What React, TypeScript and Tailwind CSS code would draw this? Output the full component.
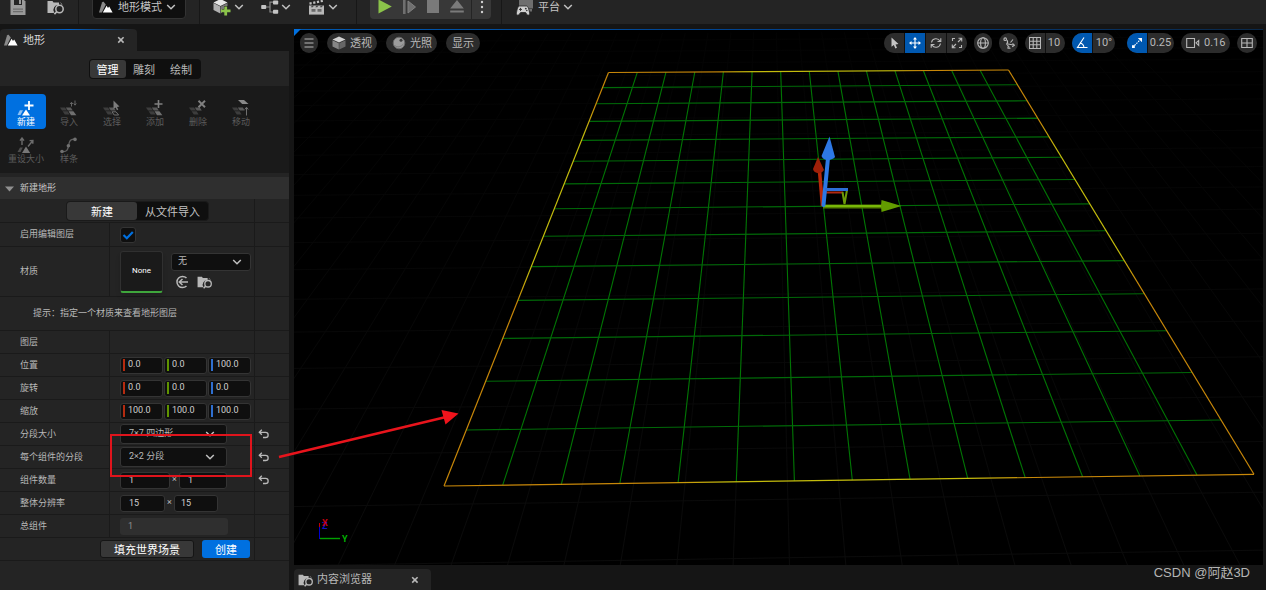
import React from "react";

type Pt = [number, number];

/* ---------- icons ---------- */

const Chevron = ({ className = "" }: { className?: string }) => (
  <svg viewBox="0 0 10 8" className={`h-2 w-[10px] shrink-0 ${className}`} fill="none" stroke="#c0c0c0" strokeWidth="1.5">
    <path d="M1.2 2 L5 5.8 L8.8 2" />
  </svg>
);

const Mountain = () => (
  <svg viewBox="0 0 14 12" className="h-3 w-[14px] shrink-0">
    <path d="M0 11.5 L3 1.5 Q3.6 0.4 4.6 0.8 L6.8 3.6 L3.6 10 L2.8 11.5 Z" fill="#8a8a8a" />
    <path d="M3.8 11.6 L7.6 4.8 L9 7 L10.2 5.4 L13.6 11.6 Z" fill="#fff" />
  </svg>
);

const SaveIcon = () => (
  <svg viewBox="0 0 16 16" className="h-4 w-4 shrink-0">
    <path d="M0.5 0 H13 L15.5 2.5 V16 H0.5 Z" fill="#9a9a9a" />
    <path d="M4 0 H12 V6 H4 Z" fill="#242424" />
    <path d="M9 0.5 H11 V5 H9 Z" fill="#9a9a9a" />
    <path d="M3 9.5 H13 V10.7 H3 Z M3 12 H13 V13.2 H3 Z" fill="#6d6d6d" />
  </svg>
);

const FolderSearch = ({ className = "h-4 w-[18px]" }: { className?: string }) => (
  <svg viewBox="0 0 18 16" className={`shrink-0 ${className}`}>
    <path d="M0.5 2 H5.5 L6.5 3.5 H12 V6.2 A4.8 4.8 0 0 0 7.2 13.6 L6.5 14 H0.5 Z" fill="#b8b8b8" />
    <path d="M13.5 3.5 L14.8 5 V6" fill="none" stroke="#777" />
    <circle cx="12.5" cy="10" r="3.7" fill="none" stroke="#b8b8b8" strokeWidth="1.5" />
    <path d="M9.8 12.7 L7.4 15.2" stroke="#b8b8b8" strokeWidth="1.7" />
  </svg>
);

const CubePlus = () => (
  <svg viewBox="0 0 18 18" className="h-[18px] w-[18px] shrink-0">
    <path d="M0.5 4.5 L7.5 1 L14.5 4.5 L7.5 8 Z" fill="#e6e6e6" />
    <path d="M0.5 5 L7.3 8.4 V15.5 L0.5 12 Z" fill="#b0b0b0" />
    <path d="M14.5 5 L7.7 8.4 V15.5 L9 14.5 V11 H11 V8 H14.5 Z" fill="#777" />
    <path d="M11.3 8.5 H14.1 V11.5 H17.5 V14.2 H14.1 V17.5 H11.3 V14.2 H8 V11.5 H11.3 Z" fill="#8bc34a" />
  </svg>
);

const Nodes = () => (
  <svg viewBox="0 0 18 14" className="h-[14px] w-[18px] shrink-0">
    <path d="M5 7 H9 M12 2.2 H9 V12 H12" fill="none" stroke="#8a8a8a" strokeWidth="1.2" />
    <rect x="0.2" y="5" width="5" height="4" rx="0.8" fill="#c4c4c4" />
    <rect x="12" y="0.5" width="5.2" height="4" rx="0.8" fill="#c4c4c4" />
    <rect x="12" y="9.8" width="5.2" height="4" rx="0.8" fill="#c4c4c4" />
  </svg>
);

const Clapper = () => (
  <svg viewBox="0 0 17 16" className="h-4 w-[17px] shrink-0">
    <path d="M1.5 4.6 L16 1.6" stroke="#c0c0c0" strokeWidth="2.2" strokeDasharray="2.2 1.6" />
    <path d="M1 6.5 H16 V15.6 H1 Z" fill="#b8b8b8" />
    <path d="M3.500 10 H7.500 V12.800 H3.500 Z M9.500 10 H13.500 V12.800 H9.500 Z" fill="#6a6a6a" />
    <path d="M4 6.500 l2 0 l-1.2 1.800 h-2z M8.500 6.500 l2 0 l-1.2 1.800 h-2z M13 6.500 l2 0 l-1.2 1.800 h-2z" fill="#4a4a4a" />
  </svg>
);

const Platform = () => (
  <svg viewBox="0 0 18 18" className="h-[18px] w-[18px] shrink-0">
    <rect x="3" y="0" width="14" height="10.5" fill="#6e6e6e" />
    <path d="M12 11 H16 V13.5 H14 Z" fill="#6e6e6e" />
    <path d="M3.4 8 H10.6 C12 8 13.4 12.5 13.6 15.6 C13.6 17.6 11.5 17.6 10.5 16 L9.6 14.5 H4.6 L3.6 16 C2.4 17.6 0.5 17.6 0.4 15.6 C0.6 12.5 2 8 3.4 8 Z" fill="#d0d0d0" stroke="#242424" strokeWidth="0.8" />
    <path d="M3 11.4 H6 M4.5 9.9 V12.9" stroke="#333" />
    <circle cx="9.8" cy="10.6" r="0.9" fill="#333" />
    <circle cx="10.8" cy="12.5" r="0.8" fill="#333" />
  </svg>
);

const Close = () => (
  <svg viewBox="0 0 8 8" className="h-2 w-2" stroke="#b8b8b8" strokeWidth="1.6">
    <path d="M1.2 1.2 L6.6 6.6 M6.6 1.2 L1.2 6.6" />
  </svg>
);

const Reset = () => (
  <svg viewBox="0 0 12 10" className="h-[10px] w-3" fill="none" stroke="#b8b8b8" strokeWidth="1.3">
    <path d="M3.8 0.8 L1.300 3.3 L3.8 5.8 M1.500 3.3 H7.6 C11 3.3 11 8.5 7.6 8.5 H5" />
  </svg>
);

/* Palette drawings share an 18x17 box */
const Tiles = () => (
  <>
    <path d="M0 7.5 H5 L7 10.5 H2 Z" fill="#3d3d3d" />
    <path d="M5.8 7.5 H10.8 L12.8 10.5 H7.8 Z" fill="#5a5a5a" />
    <path d="M2.6 11.3 H7.6 L9.6 14.5 H4.8 Z" fill="#3d3d3d" />
  </>
);
const Tile = () => <path d="M8.5 11.3 H13.4 L16.4 15.2 H11 Z" fill="#707070" />;

const paletteArt: Record<string, React.ReactNode> = {
  新建: (
    <>
      <path d="M0.5 15 L2.8 10.2 H6 L3.5 15 Z" fill="#8cc0f4" />
      <path d="M5 15.4 L9 9.4 L13 15.4 Z" fill="#fff" />
      <path d="M12 1 V10 M7.5 5.5 H16.5" stroke="#fff" strokeWidth="1.8" />
    </>
  ),
  导入: (
    <>
      <Tiles />
      <Tile />
      <path d="M11.5 6.5 V2.5 M10.2 4 L11.5 2.3 L12.8 4 M15 0.5 V5 M13.7 3.5 L15 5.2 L16.3 3.5" fill="none" stroke="#666" />
    </>
  ),
  选择: (
    <>
      <Tiles />
      <path d="M9 11.8 H13 L15.6 15 H11.2 Z" fill="none" stroke="#707070" />
      <path d="M10.5 0.5 V9 L12.6 7.4 L14 10.2 L15.3 9.5 L14 7 L16.5 6.4 Z" fill="#7d7d7d" />
    </>
  ),
  添加: (
    <>
      <Tiles />
      <Tile />
      <path d="M12.5 0 V8 M8.5 4 H16.5" stroke="#808080" strokeWidth="1.6" />
    </>
  ),
  删除: (
    <>
      <Tiles />
      <path d="M9.5 0.8 L16 7.2 M16 0.8 L9.5 7.2" stroke="#808080" strokeWidth="1.9" />
    </>
  ),
  移动: (
    <>
      <Tiles />
      <path d="M6 0 H12 L16.5 4 H10.2 Z" fill="#8a8a8a" />
      <path d="M14.5 15.5 V7.5 M12.8 9.5 L14.5 7.2 L16.2 9.5" fill="none" stroke="#707070" />
    </>
  ),
  重设大小: (
    <>
      <path d="M0.5 15 L3 10.5 H5.8 L3.5 15 Z" fill="#4d4d4d" />
      <path d="M5 16 L9 9.6 L13.2 16 Z" fill="#777" />
      <path d="M5 8 V1.5 M3 3.6 L5 1 L7 3.6 M11 9.5 L15.5 4 M12.6 3.6 L15.9 3.4 L15.8 6.8" fill="none" stroke="#6c6c6c" strokeWidth="1.4" />
    </>
  ),
  样条: (
    <>
      <path d="M2 14.5 C7 15.5 7.8 12.5 8.5 9 C9.2 4 10.5 1.6 14.8 2.4" fill="none" stroke="#5f5f5f" strokeWidth="1.3" />
      <circle cx="2" cy="14.5" r="1.8" fill="#707070" />
      <circle cx="8.4" cy="8.8" r="1.8" fill="#707070" />
      <circle cx="15" cy="2.4" r="1.8" fill="#707070" />
    </>
  ),
};

/* ---------- top bar ---------- */

const Divider = ({ className = "" }: { className?: string }) => (
  <span className={`h-full w-px shrink-0 bg-[#171717] ${className}`} />
);

const iconBtn = "flex h-full shrink-0 items-center";

function TopBar() {
  return (
    <header className="flex h-6 shrink-0 items-end overflow-hidden bg-[#242424]">
      <div className="flex h-[34px] items-center">
        <button aria-label="保存" className={`${iconBtn} ml-[10px]`}><SaveIcon /></button>
        <button aria-label="浏览" className={`${iconBtn} ml-5`}><FolderSearch className="h-4 w-5" /></button>
        <Divider className="ml-3" />
        <button className="ml-[13px] flex h-6 w-[94px] items-center rounded border border-[#333] bg-[#0f0f0f] pl-[6px] text-[11px] text-[#c4c4c4]">
          <Mountain />
          <span className="mr-1 ml-[5px] pt-[2px]">地形模式</span>
          <Chevron />
        </button>
        <Divider className="ml-[13px]" />
        <button aria-label="添加内容" className={`${iconBtn} ml-[13px] gap-[3px]`}><CubePlus /><Chevron /></button>
        <button aria-label="蓝图" className={`${iconBtn} ml-[17px] gap-[2px]`}><Nodes /><Chevron /></button>
        <button aria-label="过场动画" className={`${iconBtn} ml-[17px] gap-[3px]`}><Clapper /><Chevron /></button>
        <Divider className="ml-[18px]" />
        <div className="ml-[13px] flex h-6 items-center rounded bg-[#383838]">
          <button aria-label="播放" className="pl-2">
            <svg viewBox="0 0 14 16" className="h-4 w-[14px]"><path d="M0.5 0.5 L13.8 7.5 L0.5 14.5 Z" fill="#8bc34a" /></svg>
          </button>
          <button aria-label="步进" className="pl-[11px]">
            <svg viewBox="0 0 14 16" className="h-4 w-[14px]"><path d="M0 1 H2.6 V15 H0 Z" fill="#6f6f6f" /><path d="M5 2 L12.5 8 L5 14 Z" fill="#6f6f6f" stroke="#808080" /></svg>
          </button>
          <button aria-label="停止" className="pl-[10px]">
            <svg viewBox="0 0 12 16" className="h-4 w-3"><path d="M0 1 H12 V14 H0 Z" fill="#7a7a7a" /></svg>
          </button>
          <button aria-label="弹出" className="pr-[7px] pl-[11px]">
            <svg viewBox="0 0 14 16" className="h-4 w-[14px]"><path d="M7 1 L13.8 9.5 H0.2 Z M0.2 11.5 H13.8 V13.6 H0.2 Z" fill="#7a7a7a" /></svg>
          </button>
          <button aria-label="更多" className="flex h-6 w-5 items-center justify-center border-l border-[#242424]">
            <svg viewBox="0 0 4 18" className="h-[18px] w-1" fill="#d0d0d0"><circle cx="2" cy="4" r="1.2" /><circle cx="2" cy="9" r="1.2" /><circle cx="2" cy="14" r="1.2" /></svg>
          </button>
        </div>
        <Divider className="ml-[10px]" />
        <button className={`${iconBtn} ml-[14px] text-[11px] text-[#c4c4c4]`}>
          <Platform />
          <span className="mr-[3px] ml-1 pt-[2px]">平台</span>
          <Chevron />
        </button>
      </div>
    </header>
  );
}

/* ---------- landscape panel ---------- */

function Row({ label, id, wide = false, reset = false, height = "h-[23px]", children }: {
  label?: string; id?: string; wide?: boolean; reset?: boolean; height?: string; children?: React.ReactNode;
}) {
  return (
    <div className={`flex ${height} border-b border-[#1a1a1a]`}>
      {!wide && (
        <label htmlFor={id} className="flex w-[110px] shrink-0 items-center border-r border-[#1a1a1a] pt-px pl-5 text-[9px] text-[#b8b8b8]">
          {label}
        </label>
      )}
      <div className={`flex shrink-0 items-center border-r border-[#1a1a1a] ${wide ? "w-[255px]" : "w-[145px] pl-[10px]"}`}>{children}</div>
      {reset && (
        <button aria-label={`重置${label}`} className="ml-[3px]"><Reset /></button>
      )}
    </div>
  );
}

const field = "h-[17px] rounded-[3px] border border-[#343434] bg-[#0f0f0f] text-[9px] text-[#d0d0d0] outline-none";

function Vector({ id, label, values }: { id: string; label: string; values: string[] }) {
  const bars = ["bg-[#b52b10]", "bg-[#5f9300]", "bg-[#2f6fd0]"];
  return (
    <Row label={label} id={`${id}-0`}>
      <div className="flex gap-px">
        {values.map((v, i) => (
          <div key={i} className={`flex w-[43px] items-center pl-[2px] ${field}`}>
            <span className={`h-3 w-[2px] shrink-0 ${bars[i]}`} />
            <input id={`${id}-${i}`} aria-label={`${label} ${"XYZ"[i]}`} defaultValue={v} className="w-full min-w-0 bg-transparent pl-[3px] outline-none" />
          </div>
        ))}
      </div>
    </Row>
  );
}

function Pick({ id, value, compact = false }: { id: string; value: string; compact?: boolean }) {
  return (
    <div className={`relative flex items-center ${compact ? "h-[18px] w-20" : "h-5 w-[107px]"}`}>
      <select id={id} aria-label={value} className={`size-full appearance-none rounded-[3px] border border-[#343434] bg-[#0f0f0f] text-[9px] text-[#b8b8b8] outline-none ${compact ? "pl-[6px]" : "pl-2"}`}>
        <option>{value}</option>
      </select>
      <Chevron className={`pointer-events-none absolute ${compact ? "right-[9px]" : "right-3"}`} />
    </div>
  );
}

const textBtn = "h-[18px] rounded-[3px] pt-[3px] leading-none";

function LandscapePanel() {
  const tools = ["新建", "导入", "选择", "添加", "删除", "移动", "重设大小", "样条"];
  return (
    <aside className="relative z-10 flex w-[289px] shrink-0 flex-col">
      <div className="relative flex h-[22px] w-[137px] items-center rounded-t bg-[#242424] pr-3 pl-1 text-[11px] text-[#d8d8d8]">
        <span className="absolute top-0 right-1 left-1 h-px bg-linear-to-r from-transparent via-[#0060c8] to-transparent" />
        <Mountain />
        <span className="ml-[5px] flex-1 pt-[2px]">地形</span>
        <button aria-label="关闭"><Close /></button>
      </div>
      <div className="flex flex-1 flex-col bg-[#242424]">
        <div className="flex h-[35px] items-center justify-center">
          <div className="flex h-5 items-center rounded bg-[#0f0f0f] p-px text-[11px] text-[#b8b8b8]">
            <button className={`${textBtn} w-9 bg-[#383838] text-white`}>管理</button>
            <button className={`${textBtn} w-[37px]`}>雕刻</button>
            <button className={`${textBtn} w-[37px]`}>绘制</button>
          </div>
        </div>
        <div className="flex h-[87px] flex-wrap content-start gap-x-[3px] gap-y-[2px] bg-[#1a1a1a] pt-2 pr-3 pl-[6px]">
          {tools.map((t, i) => (
            <button key={t} className={`flex h-[35px] w-10 flex-col items-center rounded pt-[6px] text-[9px] leading-[11px] whitespace-nowrap ${i === 0 ? "bg-[#0070e0] text-white" : "text-[#5c5c5c]"}`}>
              <svg viewBox="0 0 18 17" className="h-[17px] w-[18px] shrink-0">{paletteArt[t]}</svg>
              {t}
            </button>
          ))}
        </div>
        <button className="mt-1 flex h-[22px] items-center gap-[6px] bg-[#2f2f2f] pt-px pl-[5px] text-[9px] text-[#c8c8c8]">
          <svg viewBox="0 0 9 6" className="h-[6px] w-[9px]"><path d="M0 0.5 H9 L4.5 5.5 Z" fill="#909090" /></svg>
          新建地形
        </button>
        <Row wide height="h-6">
          <div className="ml-[66px] flex h-5 items-center rounded border border-[#1a1a1a] bg-[#0f0f0f] text-[11px] text-[#c4c4c4]">
            <button className={`${textBtn} w-[70px] bg-[#383838] text-white`}>新建</button>
            <button className={`${textBtn} w-[71px]`}>从文件导入</button>
          </div>
        </Row>
        <Row label="启用编辑图层" id="layers" height="h-6">
          <span className="relative flex size-4">
            <input id="layers" type="checkbox" defaultChecked className="peer size-4 appearance-none rounded-[3px] border border-[#343434] bg-[#0f0f0f]" />
            <svg viewBox="0 0 16 16" className="pointer-events-none absolute size-4 opacity-0 peer-checked:opacity-100" fill="none" stroke="#0070e0" strokeWidth="2.2"><path d="M3.5 8 L6.8 11.2 L12.8 5" /></svg>
          </span>
        </Row>
        <Row label="材质" id="material" height="h-[50px]">
          <button className="flex h-[42px] w-[43px] items-center justify-center rounded-[3px] border border-b-2 border-[#303030] border-b-[#3fa63c] bg-[#1a1a1a] text-[8px] text-white shadow-md">None</button>
          <div className="ml-2 flex flex-col gap-1 pb-[2px]">
            <Pick id="material" value="无" compact />
            <div className="flex gap-2 pl-1">
              <button aria-label="使用所选资产">
                <svg viewBox="0 0 14 14" className="size-[14px]" fill="none" stroke="#b8b8b8" strokeWidth="1.5"><path d="M11.5 3 A5.6 5.6 0 1 0 11.5 11 M13 7 H4.5 M7.5 4 L4.3 7 L7.5 10" /></svg>
              </button>
              <button aria-label="浏览到资产"><FolderSearch className="h-[14px] w-4" /></button>
            </div>
          </div>
        </Row>
        <Row wide height="h-[34px]">
          <p className="pl-[33px] text-[9px] text-[#b8b8b8]">提示：指定一个材质来查看地形图层</p>
        </Row>
        <Row label="图层" />
        <Vector id="pos" label="位置" values={["0.0", "0.0", "100.0"]} />
        <Vector id="rot" label="旋转" values={["0.0", "0.0", "0.0"]} />
        <Vector id="scale" label="缩放" values={["100.0", "100.0", "100.0"]} />
        <Row label="分段大小" id="section" reset><Pick id="section" value="7×7 四边形" /></Row>
        <Row label="每个组件的分段" id="per" reset><Pick id="per" value="2×2 分段" /></Row>
        <Row label="组件数量" id="cx" reset>
          <input id="cx" defaultValue="1" className={`w-[50px] pl-2 ${field}`} />
          <span className="w-[9px] text-center text-[9px] text-[#b8b8b8]">×</span>
          <input aria-label="组件数量 Y" defaultValue="1" className={`w-12 pl-2 ${field}`} />
        </Row>
        <Row label="整体分辨率" id="rx">
          <input id="rx" defaultValue="15" className={`w-[45px] pl-2 ${field}`} />
          <span className="w-[9px] text-center text-[9px] text-[#b8b8b8]">×</span>
          <input aria-label="整体分辨率 Y" defaultValue="15" className={`w-11 pl-[6px] ${field}`} />
        </Row>
        <Row label="总组件" id="total">
          <input id="total" readOnly value="1" className="h-[17px] w-[108px] rounded-[3px] bg-[#2f2f2f] pl-2 text-[9px] text-[#909090] outline-none" />
        </Row>
        <Row wide>
          <div className="ml-auto flex gap-2 pr-1 text-[11px] text-white">
            <button className={`${textBtn} w-[94px] bg-[#383838] ring-1 ring-[#151515] ring-inset`}>填充世界场景</button>
            <button className={`${textBtn} w-12 bg-[#0070e0]`}>创建</button>
          </div>
        </Row>
      </div>
      {/* Callout from the section dropdown to the terrain edge */}
      <svg viewBox="0 0 480 561" className="pointer-events-none absolute top-0 left-0 h-[561px] w-[480px] max-w-none">
        <rect x="111" y="406" width="140" height="41" fill="none" stroke="#e0141c" strokeWidth="2" />
        <path d="M279 428 L446 388" stroke="#e8141c" strokeWidth="2.4" />
        <path d="M441.5 381 L458.5 384.5 L445.5 395.5 Z" fill="#f0141c" />
      </svg>
    </aside>
  );
}

/* ---------- viewport ---------- */

const CELLS = 14;
const corners: Pt[] = [[314.5, 43.5], [714.5, 41], [960, 445.3], [150, 457]];

// Projective map from the unit square to the terrain corners
function project(u: number, v: number): Pt {
  const [[x0, y0], [x1, y1], [x2, y2], [x3, y3]] = corners;
  const dx1 = x1 - x2, dx2 = x3 - x2, sx = x0 - x1 + x2 - x3;
  const dy1 = y1 - y2, dy2 = y3 - y2, sy = y0 - y1 + y2 - y3;
  const det = dx1 * dy2 - dx2 * dy1;
  const g = (sx * dy2 - dx2 * sy) / det;
  const h = (dx1 * sy - sx * dy1) / det;
  const w = g * u + h * v + 1;
  return [
    ((x1 - x0 + g * x1) * u + (x3 - x0 + h * x3) * v + x0) / w,
    ((y1 - y0 + g * y1) * u + (y3 - y0 + h * y3) * v + y0) / w,
  ];
}

function segment(u0: number, v0: number, u1: number, v1: number) {
  const a = project(u0 / CELLS, v0 / CELLS);
  const b = project(u1 / CELLS, v1 / CELLS);
  return `M${a[0].toFixed(1)} ${a[1].toFixed(1)} L${b[0].toFixed(1)} ${b[1].toFixed(1)}`;
}

function Scene() {
  const inner = Array.from({ length: CELLS - 1 }, (_, i) => i + 1);
  const ground = Array.from({ length: 44 }, (_, i) => i - 22);
  const [a, b, c, d] = corners;
  const edges: [Pt, Pt, number, number][] = [[a, b, 0.35, 0.7], [b, c, 0.2, 0.45], [c, d, 0.35, 0.65], [d, a, 0.52, 0.85]];
  return (
    <svg viewBox="0 0 969 536" preserveAspectRatio="xMidYMin slice" className="absolute inset-0 size-full" fill="none">
      <linearGradient id="ground" gradientUnits="userSpaceOnUse" x1="0" y1="0" x2="0" y2="536">
        <stop offset="0" stopColor="#030303" />
        <stop offset="1" stopColor="#0b0b0b" />
      </linearGradient>
      <g stroke="url(#ground)">
        {ground.map((k) => (
          <path key={`u${k}`} d={segment(0.6 + 0.88 * k, -3, 0.6 + 0.88 * k, 16.5)} />
        ))}
        {ground.filter((k) => k > -20 && k < 3).map((k) => (
          <path key={`v${k}`} d={segment(-16, 14.3 + 0.88 * k, 28, 14.3 + 0.88 * k)} />
        ))}
      </g>
      <g stroke="#007604" strokeWidth="1.1">
        {inner.map((k) => <path key={`c${k}`} d={segment(k, 0, k, CELLS)} />)}
        {inner.map((k) => <path key={`r${k}`} d={segment(0, k, CELLS, k)} stroke="#006a08" />)}
      </g>
      {edges.map(([p, q, s, e], i) => (
        <g key={i}>
          <linearGradient id={`edge${i}`} gradientUnits="userSpaceOnUse" x1={p[0]} y1={p[1]} x2={q[0]} y2={q[1]}>
            <stop offset={s - 0.08} stopColor="#c88708" />
            <stop offset={s} stopColor="#c4bc0c" />
            <stop offset={e} stopColor="#c4bc0c" />
            <stop offset={e + 0.08} stopColor="#c88708" />
          </linearGradient>
          <path d={`M${p[0]} ${p[1]} L${q[0]} ${q[1]}`} stroke={`url(#edge${i})`} strokeWidth="1.2" />
        </g>
      ))}
      {/* Move gizmo */}
      <path d="M528.5 177 L525.5 142" stroke="#b82808" strokeWidth="3.5" />
      <path d="M524 128 L519 140 Q519.500 143.500 525 144.500 Q529 143 530 141 Z" fill="#a02008" />
      <path d="M532 163.5 H549" stroke="#b02810" strokeWidth="2" />
      <path d="M548.500 163 L550.5 175 L553 161" stroke="#6c9c08" strokeWidth="2" />
      <path d="M529 177.5 H589" stroke="#547f00" strokeWidth="4" />
      <path d="M529 177 H589" stroke="#78b808" strokeWidth="2" />
      <path d="M587.5 171 L607.5 177 L587.5 183 Q586.5 177 587.5 171 Z" fill="#639c00" />
      <path d="M529.5 176 L534 129" stroke="#2d78e4" strokeWidth="4" strokeLinecap="round" />
      <path d="M531 160.5 H554" stroke="#2d6fd8" strokeWidth="3" />
      <path d="M535.5 107.5 L527.5 127 Q529 131 534 131 Q539 130.500 541 128 Z" fill="#2d78e4" />
      {/* Axis indicator */}
      <path d="M25.500 494 V498" stroke="#c00000" />
      <path d="M25.500 498 V510" stroke="#0000d0" />
      <path d="M26 509.500 H46" stroke="#00a000" strokeWidth="1.4" />
      <g fontFamily="Roboto, sans-serif" fontSize="9" fontWeight="700">
        <text x="28" y="500" fill="#1010c0">Z</text>
        <text x="28" y="497" fill="#c00010">X</text>
        <text x="48" y="513" fill="#00b000">Y</text>
      </g>
    </svg>
  );
}

const pill = "flex h-5 items-center overflow-hidden rounded-full bg-[#2c2c2c] text-[11px] text-[#b8b8b8]";

const G = ({ children, className = "size-3" }: { children: React.ReactNode; className?: string }) => (
  <svg viewBox="0 0 12 12" className={`shrink-0 ${className}`} fill="none" stroke="#b8b8b8" strokeWidth="1.1">{children}</svg>
);

function ViewportBar() {
  const cell = "flex h-5 w-5 items-center justify-center";
  const label = "pt-[2px]";
  return (
    <div className="relative flex items-start justify-between px-[6px] pt-1">
      <div className="flex gap-[9px]">
        <button aria-label="视口选项" className={`${pill} w-[18px] justify-center`}><G><path d="M1.500 2 H10.500 M1.500 6 H10.500 M1.500 10 H10.500" /></G></button>
        <button className={`${pill} w-[50px] gap-1 pl-[5px]`}>
          <svg viewBox="0 0 14 14" className="size-[14px]"><path d="M7 0.500 L13.500 3.500 L7 6.500 L0.500 3.500 Z" fill="#d0d0d0" /><path d="M0.500 4.200 L6.800 7.200 V13.500 L0.500 10.500 Z" fill="#868686" /><path d="M13.500 4.200 L7.200 7.200 V13.500 L13.500 10.500 Z" fill="#666" /></svg>
          <span className={label}>透视</span>
        </button>
        <button className={`${pill} w-[51px] gap-1 pl-[6px]`}>
          <svg viewBox="0 0 14 14" className="size-[14px]"><circle cx="7" cy="7" r="5.800" fill="#9c9c9c" stroke="#686868" /><path d="M2.500 9.500 Q7 13 11.500 8" stroke="#7a7a7a" fill="none" /><circle cx="9" cy="4.200" r="1.500" fill="#3c3c3c" /></svg>
          <span className={label}>光照</span>
        </button>
        <button className={`${pill} w-[34px] justify-center`}><span className={label}>显示</span></button>
      </div>
      <div className="flex gap-3">
        <div className="flex gap-[7px]">
          <div className="flex h-5 gap-px overflow-hidden rounded-full bg-[#101010]">
            <button aria-label="选择" className={`${cell} bg-[#2c2c2c]`}><G><path d="M3.500 0.500 V9.800 L5.800 7.900 L7.400 11.500 L9 10.800 L7.500 7.400 L10.500 7 Z" fill="#c4c4c4" stroke="none" /></G></button>
            <button aria-label="平移" className={`${cell} bg-[#0058b0]`}><G><path d="M6 1 V11 M1 6 H11" stroke="#fff" /><path d="M6 0 L8 2.500 H4 Z M6 12 L4 9.500 H8 Z M0 6 L2.500 4 V8 Z M12 6 L9.500 8 V4 Z" fill="#fff" stroke="none" /></G></button>
            <button aria-label="旋转" className={`${cell} bg-[#2c2c2c]`}><G><path d="M1.500 5.500 A4.600 4.600 0 0 1 10 4 M10.500 6.500 A4.600 4.600 0 0 1 2 8 M10.800 1.200 V4.500 H7.500 M1.200 10.800 V7.500 H4.500" /></G></button>
            <button aria-label="缩放" className={`${cell} bg-[#2c2c2c]`}><G><path d="M1.500 4 V1.500 H4 M10.500 8 V10.500 H8 M7 5 L10.500 1.500 M7.500 1.300 H10.700 V4.500 M5 7 L1.500 10.500 M1.300 7.500 V10.700 H4.500" /></G></button>
          </div>
          <button aria-label="世界坐标" className={`${pill} w-[18px] justify-center`}><G><circle cx="6" cy="6" r="5.300" /><ellipse cx="6" cy="6" rx="2.400" ry="5.300" /><path d="M0.700 6 H11.300" /></G></button>
          <button aria-label="表面对齐" className={`${pill} w-[19px] justify-center`}><G><path d="M4 3 Q5.500 5.500 3.500 7.500 M3.500 7 L6.500 10.500 M5 7 L10.500 8 M7.500 5.500 L10 2.500" /><circle cx="2.200" cy="2.200" r="1.300" /><path d="M9.500 6.500 L11.500 8.200 L9.200 9.800 M5 9.500 V11.300 H7.500" /></G></button>
          <div className={pill}>
            <button aria-label="网格对齐" className={cell}><G><path d="M0.500 0.500 H11.500 V11.500 H0.500 Z M4.200 0.500 V11.500 M7.800 0.500 V11.500 M0.500 4.200 H11.500 M0.500 7.800 H11.500" /></G></button>
            <button className="h-5 w-5 border-l border-[#101010] pt-px pr-[3px]">10</button>
          </div>
          <div className={pill}>
            <button aria-label="角度对齐" className={`${cell} bg-[#0058b0]`}><G><path d="M8 0.500 L1.500 10.500 H11.500 M3.800 6 Q7.500 6.500 8 10.500" stroke="#fff" /></G></button>
            <button className="h-5 w-[23px] border-l border-[#101010] pt-px">10°</button>
          </div>
        </div>
        <div className="flex gap-[7px]">
          <div className={pill}>
            <button aria-label="缩放对齐" className={`${cell} bg-[#0058b0]`}><G><path d="M3.500 8.500 L8.500 3.500" stroke="#fff" strokeDasharray="1.6 1" /><path d="M6.800 1 H11 V5.200 Z M1 8.200 H3.800 V11 H1 Z" fill="#fff" stroke="none" /></G></button>
            <button className="h-5 w-[27px] border-l border-[#101010] pt-px pr-px">0.25</button>
          </div>
          <button className={`${pill} w-[49px] gap-1 pl-[5px]`}>
            <svg viewBox="0 0 14 12" className="h-3 w-[14px]" fill="none" stroke="#b8b8b8" strokeWidth="1.100"><path d="M0.700 1.500 H8.500 V10.500 H0.700 Z M10 5.800 L12.700 3.500 V8.500 Z" /></svg>
            <span className="pt-px">0.16</span>
          </button>
          <button aria-label="视口布局" className={`${pill} w-5 justify-center`}><G><path d="M0.700 1.500 H11.300 V10.500 H0.700 Z M6 1.500 V10.500 M0.700 6 H11.300" /></G></button>
        </div>
      </div>
    </div>
  );
}

export default function App() {
  return (
    <div className="flex min-h-screen flex-col bg-[#151515] font-['Roboto','Noto_Sans_CJK_SC',sans-serif]">
      <TopBar />
      <div className="mt-[5px] flex flex-1">
        <LandscapePanel />
        <div className="ml-[5px] flex min-w-0 flex-1 flex-col">
          <main className="relative mr-[3px] flex-1 overflow-hidden bg-black">
            <Scene />
            <ViewportBar />
            <span className="absolute top-0 right-0 left-0 h-px bg-linear-to-r from-[#0058b0] via-[#00408a] to-[#0a2848]" />
            <svg viewBox="0 0 7 7" className="absolute top-0 left-0 size-[7px]"><path d="M0 0 H7 L0 7 Z" fill="#0070e0" /></svg>
          </main>
          <footer className="flex h-[25px] shrink-0 items-end justify-between">
            <div className="flex h-[21px] w-[137px] items-center rounded-t bg-[#242424] pr-3 pl-1 text-[11px] text-[#b8b8b8]">
              <FolderSearch className="h-[14px] w-4" />
              <span className="ml-[3px] flex-1 pt-[2px]">内容浏览器</span>
              <button aria-label="关闭"><Close /></button>
            </div>
            <span className="self-start pr-4 font-['Liberation_Sans','Noto_Sans_CJK_SC',sans-serif] text-[13px] leading-4 text-[#b4b4b4]">CSDN @阿赵3D</span>
          </footer>
        </div>
      </div>
    </div>
  );
}
